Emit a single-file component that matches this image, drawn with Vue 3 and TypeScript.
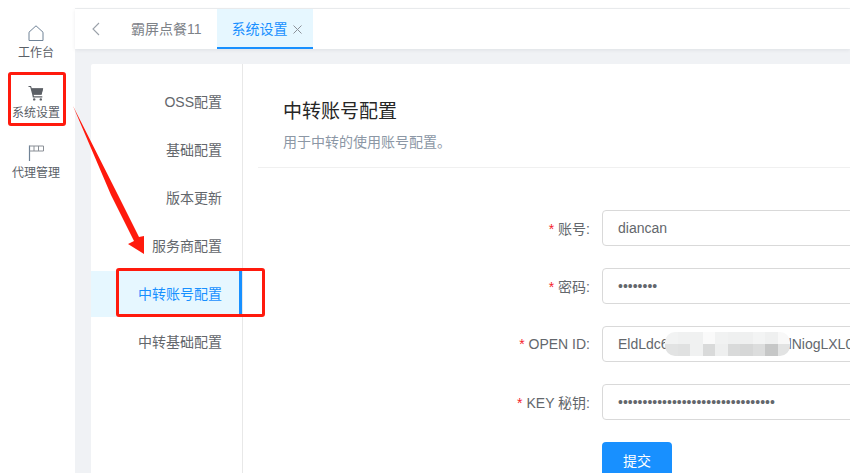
<script setup lang="ts">
const menu: string[] = ['OSS配置', '基础配置', '版本更新', '服务商配置', '中转账号配置', '中转基础配置']
const activeMenu = '中转账号配置'
const top: string[] = ['#f2f3f3', '#f0f1f1', '#f0f1f1', '#fafafa', '#f1f2f2', '#eff0f0', '#eff0f0', '#f3f4f4', '#eff0f0', '#f8f8f8']
const bottom: string[] = ['#e2e3e3', '#e0e1e1', '#f0f1f1', '#d9dada', '#eeefef', '#d9dada', '#d6d7d7', '#dcdddd', '#c6c7c7', '#e2e3e3']
const cells = [...top, ...bottom]
</script>

<template>
  <div class="page">
    <aside class="sidebar">
      <div class="nav-item">
        <svg class="nav-icon" width="16" height="16" viewBox="0 0 16 16" fill="none">
          <path d="M1 7.2 8 .8l7 6.4V15.500H1z" stroke="#6f8296" stroke-width="1" stroke-linejoin="round" />
        </svg>
        <span>工作台</span>
      </div>
      <div class="nav-item">
        <svg class="nav-icon" width="16" height="16" viewBox="0 0 16 16">
          <path d="M.5 1H3l.8 2.2h11.4l-1.6 6.6H5.6L6 11.3h8.3v1.1H4.8L4.2 9.6 2.2 2.1H.5z" fill="#5c6066" />
          <path d="M4 3.400h11l-1.600 6.200H5.500z" fill="#5c6066" />
          <circle cx="6.200" cy="14.400" r="1.200" fill="#5c6066" />
          <circle cx="12.800" cy="14.400" r="1.200" fill="#5c6066" />
        </svg>
        <span>系统设置</span>
      </div>
      <div class="nav-item">
        <svg class="nav-icon" width="16" height="16" viewBox="0 0 16 16" fill="none">
          <path d="M1.500 .5V16" stroke="#6f8296" stroke-width="1.200" />
          <path d="M1.500 1h14v5h-14M6 1v5M10.500 1v5" stroke="#8a8f96" stroke-width="1" />
        </svg>
        <span>代理管理</span>
      </div>
    </aside>

    <main class="main">
      <div class="top-strip"></div>
      <header class="tabs">
        <svg class="back" width="8" height="14" viewBox="0 0 8 14" fill="none">
          <path d="M7 1 1 7l6 6" stroke="#9aa1a9" stroke-width="1.100" />
        </svg>
        <div class="tab">霸屏点餐11</div>
        <div class="tab tab-active">系统设置
          <svg class="close" width="9" height="9" viewBox="0 0 9 9" fill="none">
            <path d="M.5.5l8 8M8.500.5l-8 8" stroke="#8c9199" stroke-width="1" />
          </svg>
        </div>
      </header>

      <section class="body">
        <div class="card">
          <nav class="menu">
            <div
              v-for="item in menu"
              :key="item"
              class="menu-item"
              :class="{ 'menu-active': item === activeMenu }"
            >{{ item }}</div>
          </nav>

          <div class="content">
            <div class="head">
              <h1>中转账号配置</h1>
              <p>用于中转的使用账号配置。</p>
            </div>
            <form class="form" @submit.prevent>
              <div class="row">
                <label><i>*</i> 账号:</label>
                <div class="input">diancan</div>
              </div>
              <div class="row">
                <label><i>*</i> 密码:</label>
                <div class="input dots">••••••••</div>
              </div>
              <div class="row">
                <label><i>*</i> OPEN ID:</label>
                <div class="input">
                  <span>EldLdc6</span><span class="hidden-gap"></span><span>lNiogLXL0</span>
                  <div class="mosaic">
                    <b v-for="(c, n) in cells" :key="n" :style="{ background: c }"></b>
                  </div>
                </div>
              </div>
              <div class="row">
                <label><i>*</i> KEY 秘钥:</label>
                <div class="input dots">••••••••••••••••••••••••••••••••</div>
              </div>
              <div class="row">
                <label></label>
                <button type="submit">提交</button>
              </div>
            </form>
          </div>
        </div>
      </section>
    </main>

    <div class="mark mark-nav"></div>
    <div class="mark mark-menu"></div>
    <svg class="arrow" width="850" height="473" viewBox="0 0 850 473">
      <path d="M73 106 118 195 139 237 144 236 144 254 128 244 134 241 111 195z" fill="#ff1a0d" />
    </svg>
  </div>
</template>

<style>
html, body { margin: 0; background: #fff; }
</style>

<style scoped>
.page {
  position: relative;
  display: flex;
  width: 850px;
  height: 473px;
  overflow: hidden;
  font-family: "Liberation Sans", "Noto Sans CJK SC", sans-serif;
  font-size: 14px;
  color: #5f6368;
}
.sidebar {
  flex: 0 0 75px;
  display: flex;
  flex-direction: column;
  align-items: center;
  padding: 25px 3px 0 0;
  box-sizing: border-box;
  background: #fff;
}
.nav-item {
  display: flex;
  flex-direction: column;
  align-items: center;
  height: 60px;
  font-size: 12px;
  line-height: 16px;
  color: #5a6067;
}
.nav-icon { margin-bottom: 4px; }
.main {
  flex: 1;
  min-width: 0;
  display: flex;
  flex-direction: column;
  background: #f0f2f5;
}
.top-strip {
  height: 8px;
  flex: none;
  background: #fff;
  border-bottom: 1px solid #eceef0;
}
.tabs {
  flex: none;
  height: 40px;
  display: flex;
  align-items: stretch;
  background: #fff;
  box-shadow: 0 1px 4px rgba(0, 21, 41, .08);
  position: relative;
}
.back { align-self: center; margin: 0 16px 0 17px; }
.tab {
  padding: 0 15px;
  line-height: 40px;
  color: #7d8288;
  white-space: nowrap;
}
.tab-active {
  box-sizing: border-box;
  width: 96px;
  padding-left: 15px;
  color: #1890ff;
  background: #e6f7ff;
  border-bottom: 2px solid #1890ff;
}
.close { margin-left: 2px; }
.body { flex: 1; min-height: 0; padding: 15px 0 0 16px; }
.card {
  display: flex;
  width: 800px;
  height: 100%;
  background: #fff;
  border-radius: 2px 0 0 0;
}
.menu {
  flex: 0 0 151px;
  padding-top: 15px;
  border-right: 1px solid #e8e8e8;
}
.menu-item {
  box-sizing: border-box;
  height: 46px;
  margin-bottom: 2px;
  padding-right: 20px;
  line-height: 46px;
  text-align: right;
  color: #63676c;
}
.menu-active {
  color: #1890ff;
  background: #e6f7ff;
  border-right: 3px solid #1890ff;
  padding-right: 17px;
}
.content { flex: 1; min-width: 0; padding-left: 15px; }
.head {
  height: 104px;
  box-sizing: border-box;
  padding: 34px 0 0 25px;
  border-bottom: 1px solid #f0f0f0;
}
h1 {
  margin: 0;
  font-size: 19px;
  font-weight: 400;
  line-height: 28px;
  color: #262626;
}
p {
  margin: 5px 0 0;
  font-size: 14px;
  line-height: 22px;
  color: #8c97a5;
}
.form { padding-top: 42px; }
.row {
  display: flex;
  align-items: center;
  height: 36px;
  margin-bottom: 22px;
}
label {
  flex: 0 0 344px;
  padding-right: 12px;
  box-sizing: border-box;
  text-align: right;
  color: #63676c;
  white-space: nowrap;
}
label i { font-style: normal; color: #f5222d; font-family: "Liberation Sans", sans-serif; }
.input {
  position: relative;
  box-sizing: border-box;
  flex: none;
  width: 400px;
  height: 36px;
  padding: 0 15px;
  line-height: 34px;
  border: 1px solid #d9d9d9;
  border-radius: 4px;
  color: #63676c;
  white-space: nowrap;
  overflow: hidden;
}
.dots { letter-spacing: 0; font-size: 14px; }
.hidden-gap { display: inline-block; width: 120px; }
.mosaic {
  position: absolute;
  left: 62px;
  top: 5px;
  width: 125px;
  height: 24px;
  display: grid;
  grid-template-columns: repeat(10, 1fr);
  grid-template-rows: repeat(2, 1fr);
  border-radius: 10px;
  overflow: hidden;
}
button {
  width: 70px;
  height: 36px;
  padding: 0;
  border: 0;
  border-radius: 4px;
  background: #1890ff;
  color: #fff;
  font: inherit;
}
.mark {
  position: absolute;
  box-sizing: border-box;
  border: 3px solid #ff1a0d;
  border-radius: 3px;
}
.mark-nav { left: 8px; top: 72px; width: 58px; height: 54px; }
.mark-menu { left: 116px; top: 268px; width: 149px; height: 49px; }
.arrow { position: absolute; left: 0; top: 0; pointer-events: none; }
</style>
